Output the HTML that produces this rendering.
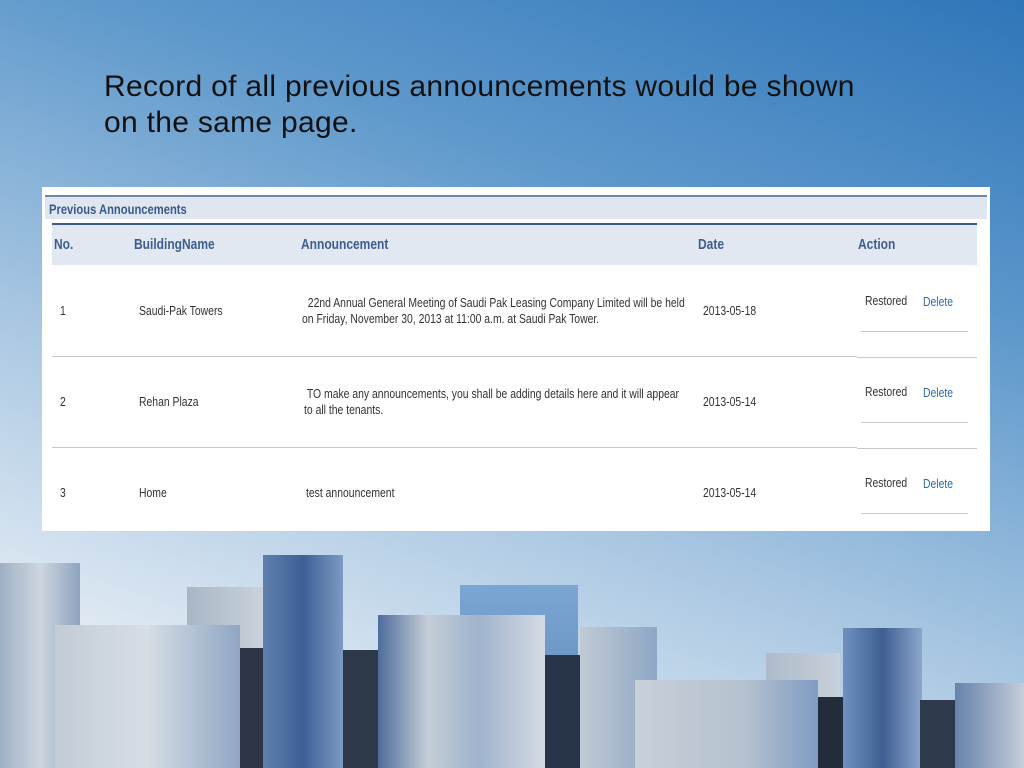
<!DOCTYPE html>
<html><head><style>
*{margin:0;padding:0;box-sizing:border-box}
body{width:1024px;height:768px;overflow:hidden;position:relative;font-family:"Liberation Sans",sans-serif;
background:linear-gradient(200deg,#2f76b9 0%,#5f99cc 30%,#a9c7e2 60%,#dfe9f3 85%,#f2f6fa 100%);}
.t{position:absolute;left:104px;top:69px;font-size:30px;line-height:36px;color:#111;letter-spacing:0.3px}
.panel{position:absolute;left:42px;top:187px;width:948px;height:344px;background:#fff}
.n{transform:scaleX(.8);transform-origin:0 0;white-space:nowrap}
.title{position:absolute;left:3px;top:8px;width:942px;height:24px;background:#dfe6f0;border-top:2px solid #6f86a8}
.title span{position:absolute;left:4px;top:4px;font-size:14px;font-weight:bold;color:#3a5a8c}
.hdr{position:absolute;left:10px;top:36px;width:925px;height:42px;background:#e2e8f1;border-top:2px solid #3c5a8a}
.h{position:absolute;top:11px;font-size:15px;font-weight:bold;color:#3d5d8f}
.c{position:absolute;font-size:13px;color:#333;line-height:16px}
.d{color:#2f6aa8}
.ln{position:absolute;height:1px;background:#c8c8c8}
</style></head><body>
<div class="t">Record of all previous announcements would be shown<br>on the same page.</div>
<div class="panel">
<div class="title"><span class="n">Previous Announcements</span></div>
<div class="hdr">
<div class="h n" style="left:2px">No.</div>
<div class="h n" style="left:82px">BuildingName</div>
<div class="h n" style="left:249px">Announcement</div>
<div class="h n" style="left:646px">Date</div>
<div class="h n" style="left:806px">Action</div>
</div>
<div class="c n" style="left:18px;top:116px">1</div>
<div class="c n" style="left:97px;top:116px">Saudi-Pak Towers</div>
<div class="c n" style="left:260px;top:108px">&nbsp;&nbsp;22nd Annual General Meeting of Saudi Pak Leasing Company Limited will be held<br>on Friday, November 30, 2013 at 11:00 a.m. at Saudi Pak Tower.</div>
<div class="c n" style="left:661px;top:116px">2013-05-18</div>
<div class="c n" style="left:823px;top:106px">Restored</div><div class="c d n" style="left:881px;top:107px">Delete</div>
<div class="ln" style="left:819px;top:144px;width:107px"></div>
<div class="ln" style="left:10px;top:169px;width:805px"></div><div class="ln" style="left:815px;top:170px;width:120px"></div>

<div class="c n" style="left:18px;top:207px">2</div>
<div class="c n" style="left:97px;top:207px">Rehan Plaza</div>
<div class="c n" style="left:262px;top:199px">&nbsp;TO make any announcements, you shall be adding details here and it will appear<br>to all the tenants.</div>
<div class="c n" style="left:661px;top:207px">2013-05-14</div>
<div class="c n" style="left:823px;top:197px">Restored</div><div class="c d n" style="left:881px;top:198px">Delete</div>
<div class="ln" style="left:819px;top:235px;width:107px"></div>
<div class="ln" style="left:10px;top:260px;width:805px"></div><div class="ln" style="left:815px;top:261px;width:120px"></div>

<div class="c n" style="left:18px;top:298px">3</div>
<div class="c n" style="left:97px;top:298px">Home</div>
<div class="c n" style="left:264px;top:298px">test announcement</div>
<div class="c n" style="left:661px;top:298px">2013-05-14</div>
<div class="c n" style="left:823px;top:288px">Restored</div><div class="c d n" style="left:881px;top:289px">Delete</div>
<div class="ln" style="left:819px;top:326px;width:107px"></div>
</div>

<div style="position:absolute;left:0;top:563px;width:80px;height:205px;background:linear-gradient(90deg,#9fb0c4,#cdd6e0 50%,#8ea4bf)"></div>
<div style="position:absolute;left:187px;top:587px;width:76px;height:181px;background:linear-gradient(90deg,#a8b6c4,#c9d2dc)"></div>
<div style="position:absolute;left:240px;top:648px;width:28px;height:120px;background:#2c3646"></div>
<div style="position:absolute;left:55px;top:625px;width:185px;height:143px;background:linear-gradient(90deg,#c3ccd6,#d6dde5 50%,#8fa6c4)"></div>
<div style="position:absolute;left:263px;top:555px;width:80px;height:213px;background:linear-gradient(90deg,#5f7fae,#3d5f96 50%,#7c9ac2)"></div>
<div style="position:absolute;left:343px;top:650px;width:36px;height:118px;background:#2d3848"></div>
<div style="position:absolute;left:460px;top:585px;width:118px;height:183px;background:linear-gradient(180deg,#7aa6d4,#5d82b4)"></div>
<div style="position:absolute;left:540px;top:655px;width:40px;height:113px;background:#27344a"></div>
<div style="position:absolute;left:378px;top:615px;width:167px;height:153px;background:linear-gradient(90deg,#4e6c9c,#c5ced8 30%,#9fb3cc 60%,#d4dae2)"></div>
<div style="position:absolute;left:580px;top:627px;width:77px;height:141px;background:linear-gradient(90deg,#c1cad4,#8ea7c6)"></div>
<div style="position:absolute;left:766px;top:653px;width:74px;height:115px;background:linear-gradient(90deg,#aebbca,#c8d0da)"></div>
<div style="position:absolute;left:635px;top:680px;width:183px;height:88px;background:linear-gradient(90deg,#c8d0d9,#b5c1cf 60%,#7f9cc3)"></div>
<div style="position:absolute;left:818px;top:697px;width:25px;height:71px;background:#232c3a"></div>
<div style="position:absolute;left:843px;top:628px;width:79px;height:140px;background:linear-gradient(90deg,#6f90bf,#3f5f92 50%,#8aa6cc)"></div>
<div style="position:absolute;left:920px;top:700px;width:36px;height:68px;background:#2f3a4c"></div>
<div style="position:absolute;left:955px;top:683px;width:69px;height:85px;background:linear-gradient(90deg,#6782ad,#c5ced8)"></div>
</body></html>
